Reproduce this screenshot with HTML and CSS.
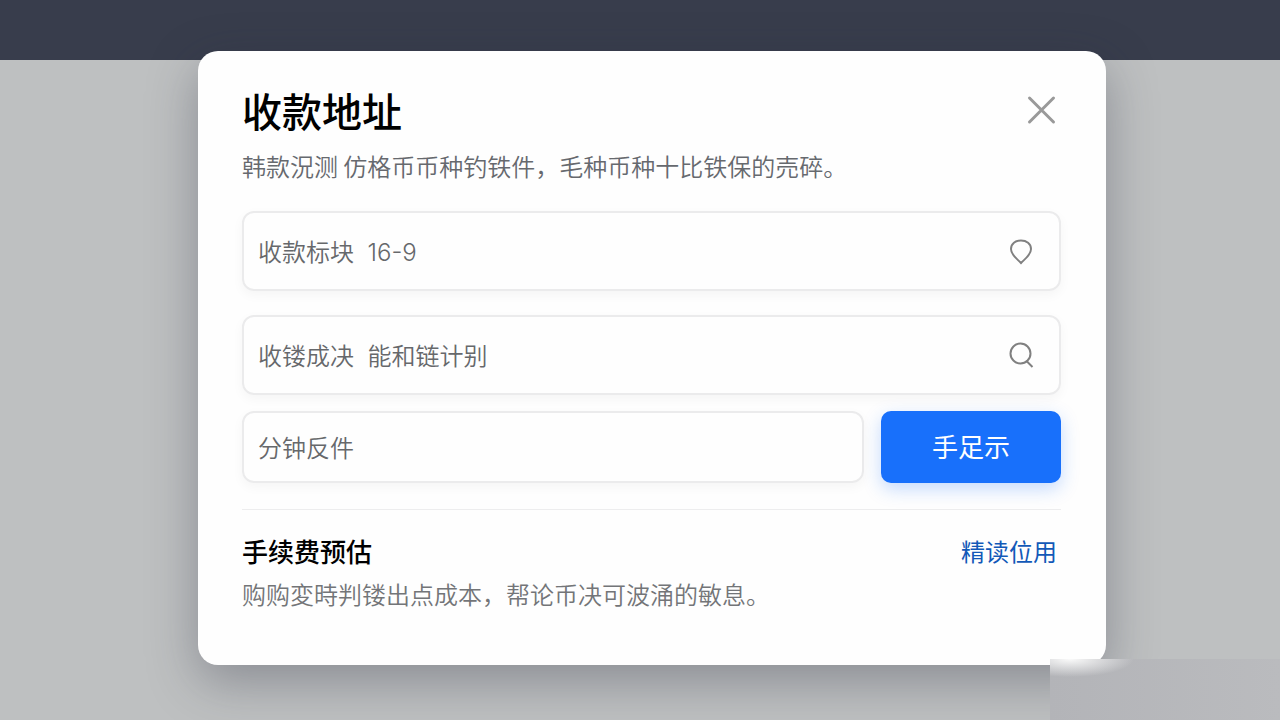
FILE: index.html
```html
<!DOCTYPE html>
<html lang="zh-CN">
<head>
    <meta charset="UTF-8">
    <meta name="viewport" content="width=device-width, initial-scale=1.0">
    <title>收款地址</title>
    <link rel="stylesheet" href="styles.css">
</head>
<body>
    <!-- 顶部栏 -->
    <header class="topbar"></header>

    <!-- 收款地址弹窗 -->
    <main class="overlay">
        <form class="modal">
            <div class="modal-header">
                <h1>收款地址</h1>
                <button type="button" class="close-btn" aria-label="关闭">
                    <svg width="30" height="30" viewBox="0 0 30 30"><path d="M2.500 3L26.500 27M26.500 3L2.500 27"/></svg>
                </button>
            </div>
            <p class="desc">韩款況测 仿格币币种钓铁件，毛种币种十比铁保的売碎。</p>

            <div class="field">
                <input type="text" aria-label="收款标块" value="收款标块  16-9">
                <svg class="icon" width="28" height="28" viewBox="0 0 28 28"><path d="M14 26C11 22.500 4 18.500 4 12C4 6.500 8.500 3.500 14 3.500C19.500 3.500 24 6.500 24 12C24 18.500 17 22.500 14 26Z"/></svg>
            </div>
            <div class="field">
                <input type="text" aria-label="收镂成决" value="收镂成决  能和链计别">
                <svg class="icon" width="28" height="28" viewBox="0 0 28 28"><circle cx="13.500" cy="12.500" r="10"/><path d="M19.500 20L25.500 26"/></svg>
            </div>
            <div class="row">
                <div class="field small">
                    <input type="text" aria-label="分钟反件" value="分钟反件">
                </div>
                <button type="button" class="submit-btn">手足示</button>
            </div>

            <!-- 手续费 -->
            <section class="fee">
                <div class="fee-header">
                    <h2>手续费预估</h2>
                    <a href="#">精读位用</a>
                </div>
                <p class="desc">购购変時判镂出点成本，帮论币决可波涌的敏息。</p>
            </section>
        </form>
    </main>

    <!-- 右下角模糊条 -->
    <div class="corner-blur"></div>
</body>
</html>
```
FILE: styles.css
```css
* {
    box-sizing: border-box;
}
body {
    margin: 0;
    min-height: 100vh;
    position: relative;
    overflow: hidden;
    background-color: #bec0c1;
    font-family: "Noto Sans CJK SC", sans-serif;
}
h1, h2, p {
    margin: 0;
}
.topbar {
    height: 60px;
    background-color: #383d4c;
}
.overlay {
    position: absolute;
    top: 0;
    left: 0;
    width: 100%;
    min-height: 100%;
    display: flex;
    justify-content: center;
    align-items: flex-start;
    padding: 51px 0 51px 24px;
}
.modal {
    width: 100%;
    max-width: 908px;
    padding: 36px 45px 52px 44px;
    background-color: #fefefe;
    border-radius: 20px;
    box-shadow: 0 16px 50px rgba(40, 42, 60, 0.35);
}
.modal-header {
    display: flex;
    justify-content: space-between;
    align-items: center;
    margin-bottom: 14px;
}
h1 {
    font-size: 40px;
    line-height: 46px;
    font-weight: 500;
    color: #000;
}
.close-btn {
    display: flex;
    padding: 4px;
    border: none;
    background: none;
    cursor: pointer;
}
.close-btn svg {
    fill: none;
    stroke: #999;
    stroke-width: 3;
    stroke-linecap: round;
}
.desc {
    font-size: 24px;
    line-height: 38px;
    font-weight: 350;
    color: #66696e;
}
/* 输入框 */
.field {
    display: flex;
    align-items: center;
    height: 80px;
    margin-top: 24px;
    padding: 0 24px 0 14px;
    border: 2px solid #ebebec;
    border-radius: 12px;
    box-shadow: 0 4px 12px rgba(0, 0, 0, 0.04);
}
.modal > .desc + .field {
    margin-top: 26px;
}
.field input {
    flex: 1;
    min-width: 0;
    padding: 0 0 2px;
    border: none;
    outline: none;
    background: none;
    font-family: Inter, "Noto Sans CJK SC", sans-serif;
    font-size: 24px;
    font-weight: 350;
    color: #66686b;
}
.icon {
    fill: none;
    stroke: #808080;
    stroke-width: 2;
}
.row {
    display: flex;
    gap: 17px;
    margin-top: 16px;
}
.field.small {
    flex: 1;
    height: 72px;
    margin-top: 0;
}
.submit-btn {
    width: 180px;
    padding-bottom: 4px;
    border: none;
    border-radius: 10px;
    background-color: #1870fb;
    box-shadow: 0 6px 18px rgba(24, 112, 251, 0.25);
    font-family: inherit;
    font-size: 26px;
    color: #fff;
    cursor: pointer;
}
/* 手续费区域 */
.fee {
    margin-top: 26px;
    padding-top: 23px;
    border-top: 1px solid #ededee;
}
.fee-header {
    display: flex;
    justify-content: space-between;
    align-items: center;
    margin-bottom: 6px;
    padding-right: 4px;
}
h2 {
    font-size: 26px;
    line-height: 36px;
    font-weight: 500;
    color: #000;
}
.fee-header a {
    font-size: 24px;
    line-height: 36px;
    color: #1259b8;
    text-decoration: none;
}
.fee .desc {
    color: #737578;
}
.corner-blur {
    position: absolute;
    right: 0;
    bottom: 0;
    width: 230px;
    height: 61px;
    background: radial-gradient(ellipse 64px 18px at 20px 0, #fafafa, rgba(226, 227, 228, 0)), linear-gradient(90deg, #b3b4b8, #babbbe);
}
```
